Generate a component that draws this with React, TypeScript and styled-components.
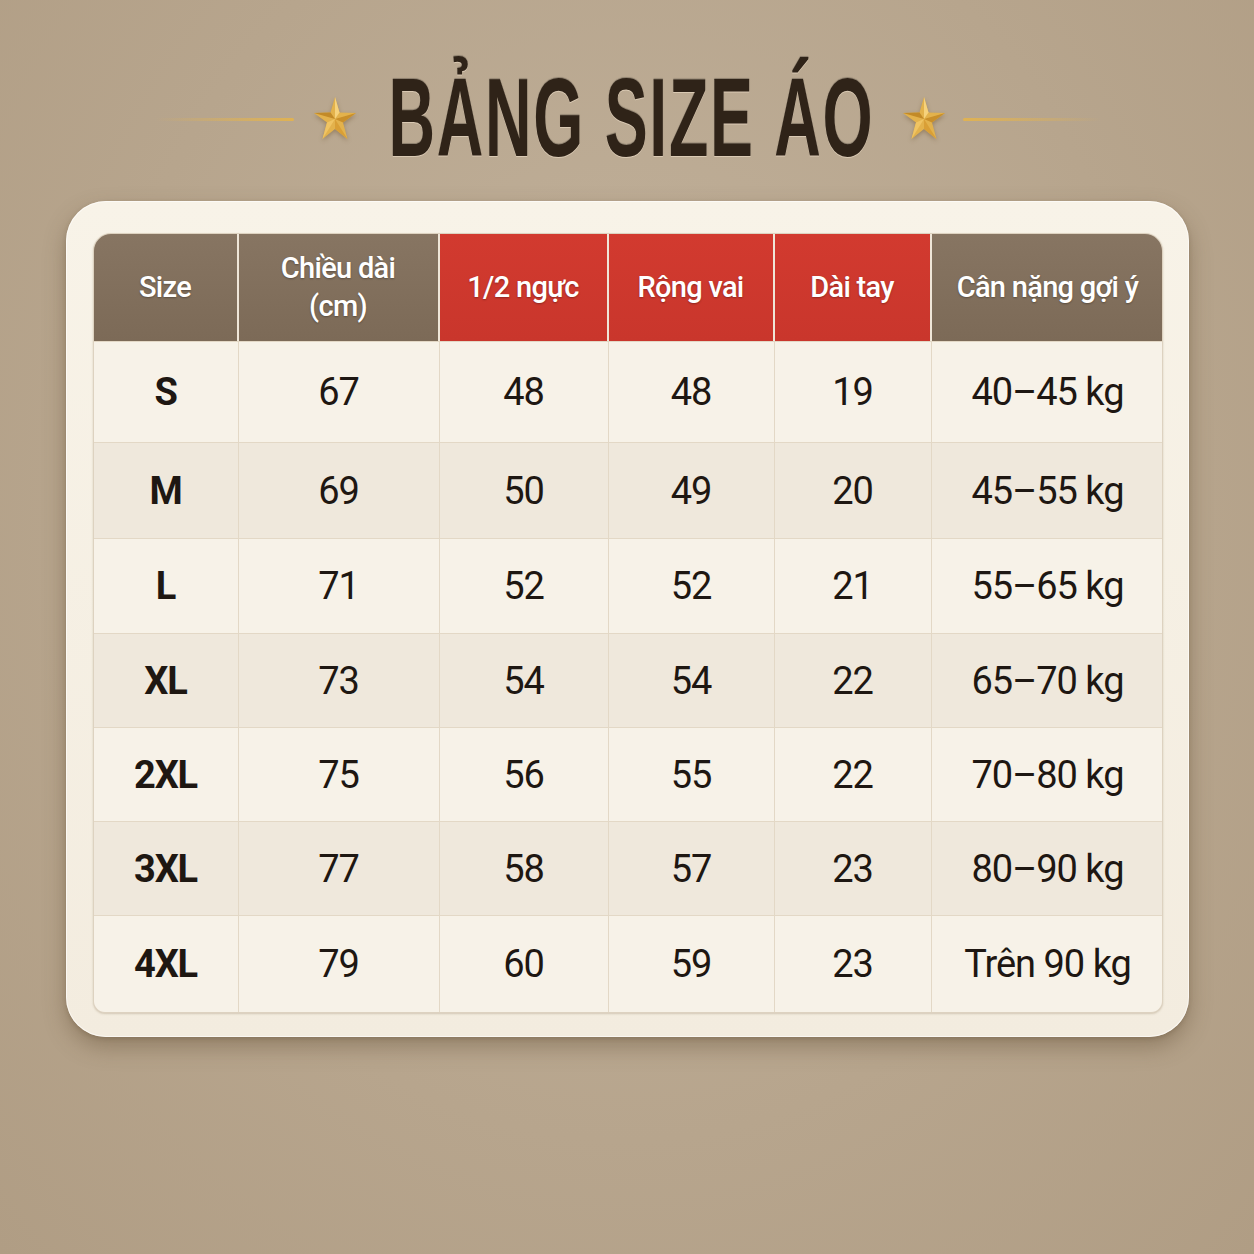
import styled, { createGlobalStyle } from 'styled-components';

// Size chart data
const columns = [
  { label: 'Size', width: 145, tone: 'brown' },
  { label: 'Chiều dài\n(cm)', width: 201, tone: 'brown' },
  { label: '1/2 ngực', width: 169, tone: 'red' },
  { label: 'Rộng vai', width: 166, tone: 'red' },
  { label: 'Dài tay', width: 157, tone: 'red' },
  { label: 'Cân nặng gợi ý', width: 232, tone: 'brown' },
];

const rows = [
  ['S', '67', '48', '48', '19', '40–45 kg'],
  ['M', '69', '50', '49', '20', '45–55 kg'],
  ['L', '71', '52', '52', '21', '55–65 kg'],
  ['XL', '73', '54', '54', '22', '65–70 kg'],
  ['2XL', '75', '56', '55', '22', '70–80 kg'],
  ['3XL', '77', '58', '57', '23', '80–90 kg'],
  ['4XL', '79', '60', '59', '23', 'Trên 90 kg'],
];

const rowHeights = [101, 96, 95, 94, 94, 94, 97];

const GlobalStyle = createGlobalStyle`
  html, body {
    margin: 0;
    padding: 0;
    background: #b8a68e;
  }
  body {
    font-family: Roboto, "Liberation Sans", sans-serif;
  }
`;

const Page = styled.div`
  width: 1254px;
  height: 1254px;
  background: radial-gradient(ellipse at 50% 40%, #c2b29c 0%, #b7a58d 60%, #b09d84 100%);
  display: flex;
  flex-direction: column;
  align-items: center;
  padding-top: 62px;
  box-sizing: border-box;
`;

const TitleRow = styled.div`
  display: flex;
  align-items: center;
  height: 112px;
  margin-left: 2px;
`;

const Rule = styled.div<{ $side: 'left' | 'right' }>`
  width: 138px;
  height: 3px;
  border-radius: 2px;
  background: ${(p) =>
    p.$side === 'left'
      ? 'linear-gradient(90deg, rgba(224,178,80,0) 0%, #e0b252 100%)'
      : 'linear-gradient(90deg, #e0b252 0%, rgba(224,178,80,0) 100%)'};
  margin-top: 2px;
`;

const StarWrap = styled.div<{ $side: 'left' | 'right' }>`
  width: 44px;
  height: 46px;
  margin: ${(p) => (p.$side === 'left' ? '0 33px 0 19px' : '0 17px 0 29px')};
  filter: drop-shadow(0 2px 2px rgba(90, 60, 20, 0.35));
`;

const TitleBox = styled.div`
  width: 483px;
  display: flex;
  justify-content: center;
  overflow: visible;
`;

const Title = styled.h1`
  margin: 0;
  font-family: "Liberation Sans", Arial, sans-serif;
  font-weight: 700;
  font-size: 112px;
  line-height: 1;
  color: #2f2318;
  letter-spacing: 3px;
  white-space: nowrap;
  transform: scaleX(0.575);
  text-shadow: 0 1px 0 rgba(255, 240, 220, 0.45), 0 -1px 1px rgba(0, 0, 0, 0.25);
`;

const Card = styled.div`
  margin-top: 27px;
  width: 1123px;
  height: 836px;
  box-sizing: border-box;
  padding: 32px 26px 26px 27px;
  background: linear-gradient(180deg, #f8f3e8 0%, #f3ecdf 100%);
  border-radius: 40px;
  box-shadow: 0 10px 22px rgba(80, 60, 35, 0.35), 0 2px 4px rgba(80, 60, 35, 0.2),
    inset 0 0 0 1px rgba(255, 255, 255, 0.6);
`;

const Table = styled.div`
  display: grid;
  grid-template-columns: ${columns.map((c) => `${c.width}px`).join(' ')};
  grid-template-rows: 107px ${rowHeights.map((h) => `${h}px`).join(' ')};
  border-radius: 18px 18px 12px 12px;
  overflow: hidden;
  border: 1px solid #ddd2c0;
  box-shadow: 0 1px 2px rgba(120, 95, 60, 0.25);
  background: #e4d9c8;
`;

const HeadCell = styled.div<{ $tone: string; $last?: boolean }>`
  display: flex;
  align-items: center;
  justify-content: center;
  text-align: center;
  white-space: pre-line;
  color: #fff;
  font-family: Roboto, "Liberation Sans", sans-serif;
  font-weight: 500;
  font-size: 29px;
  line-height: 1.3;
  letter-spacing: -0.7px;
  background: ${(p) =>
    p.$tone === 'red'
      ? 'linear-gradient(180deg, #d23a2f 0%, #c9362c 100%)'
      : 'linear-gradient(180deg, #877562 0%, #7c6a57 100%)'};
  border-right: ${(p) => (p.$last ? 'none' : '2px solid #efe6d8')};
  text-shadow: 0 1px 2px rgba(0, 0, 0, 0.3);
`;

const Cell = styled.div<{ $alt: boolean; $bold?: boolean; $last?: boolean }>`
  display: flex;
  align-items: center;
  justify-content: center;
  background: ${(p) => (p.$alt ? '#efe8dc' : '#f7f2e8')};
  border-top: 1px solid #e3d8c6;
  border-right: ${(p) => (p.$last ? 'none' : '1px solid #e3d8c6')};
  color: #1e1712;
  font-family: Roboto, "Liberation Sans", sans-serif;
  font-size: 38px;
  font-weight: ${(p) => (p.$bold ? 700 : 400)};
  letter-spacing: ${(p) => (p.$bold ? '-1.2px' : '-1px')};
`;

const Star = () => (
  <svg viewBox="0 0 44 44" width="44" height="46">
    <polygon points="22,1 26.5,16.5 43,17 30,26.5 34.5,43 22,33 9.5,43 14,26.5 1,17 17.5,16.5" fill="#e3b24c" />
    <polygon points="22,1 22,23 26.5,16.5" fill="#f6d27c" />
    <polygon points="43,17 22,23 30,26.5" fill="#c98f2a" />
    <polygon points="34.5,43 22,23 22,33" fill="#d99f36" />
    <polygon points="9.5,43 22,23 14,26.5" fill="#f0c463" />
    <polygon points="1,17 22,23 17.5,16.5" fill="#c28a28" />
  </svg>
);

function App() {
  return (
    <Page>
      <GlobalStyle />
      <TitleRow>
        <Rule $side="left" />
        <StarWrap $side="left">
          <Star />
        </StarWrap>
        <TitleBox>
          <Title>BẢNG SIZE ÁO</Title>
        </TitleBox>
        <StarWrap $side="right">
          <Star />
        </StarWrap>
        <Rule $side="right" />
      </TitleRow>
      <Card>
        <Table>
          {columns.map((c, i) => (
            <HeadCell key={i} $tone={c.tone} $last={i === columns.length - 1}>
              {c.label}
            </HeadCell>
          ))}
          {rows.map((row, r) =>
            row.map((value, i) => (
              <Cell key={`${r}-${i}`} $alt={r % 2 === 1} $bold={i === 0} $last={i === row.length - 1}>
                {value}
              </Cell>
            ))
          )}
        </Table>
      </Card>
    </Page>
  );
}

export default App;
